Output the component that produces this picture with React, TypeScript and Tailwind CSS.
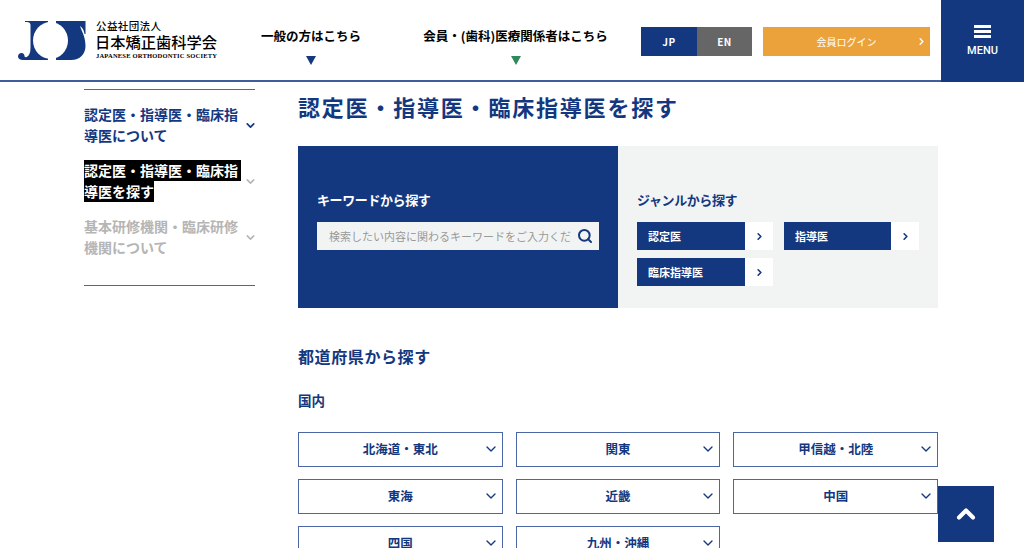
import {ChevronDown, ChevronRight, ChevronUp, Search} from "lucide-react";

const jpFont = "font-['Noto_Sans_CJK_JP','Noto_Sans',sans-serif]";

function Logo() {
	return (
		<div className="flex items-center">
			<svg width="68" height="39" viewBox="0 0 68 39" className="mr-[10px] shrink-0">
				<path d="M7 0H30V39H5C2 39 0 37.500 0 35.500C0 33.500 1.500 32 3.500 32C5.500 32 6.500 33.500 6.500 35C6.500 36 7.500 36.500 8.500 36C11 35 12.500 32 12.500 27V4C12.500 2 11 1 9 1H7Z" fill="#14387f" />
				<path d="M38 0H67.500V13H66.500C66 9.500 64.500 6.500 62 5C63 9 67.500 15 67.500 25C67.500 33 62 39 53 39H38Z" fill="#14387f" />
				<ellipse cx="32.500" cy="19.500" rx="17.500" ry="18.500" fill="#ffffff" />
			</svg>
			<div className="flex flex-col text-black">
				<span className="text-[10.500px] leading-[12px] font-medium tracking-[0.4px]">公益社団法人</span>
				<span className="text-[15.250px] leading-[18px] font-medium -ml-px">日本矯正歯科学会</span>
				<span className="mt-px font-['Liberation_Serif',serif] text-[6.500px] leading-[9px] font-bold tracking-[0.2px] whitespace-nowrap">JAPANESE ORTHODONTIC SOCIETY</span>
			</div>
		</div>
	);
}

function NavItem({label, color, width}: {label: string; color: string; width: string}) {
	return (
		<div className={`flex flex-col items-center ${width}`}>
			<span className="text-[12.500px] leading-[20px] font-bold text-black whitespace-nowrap">{label}</span>
			<span className={`mt-[10px] w-0 h-0 border-x-[5px] border-x-transparent border-t-[9px] ${color}`} />
		</div>
	);
}

function Header() {
	return (
		<header className="h-[82px] shrink-0 flex border-b-2 border-[#3f5c9c] bg-white">
			<div className="w-[223px] pl-[18px] flex items-center shrink-0">
				<Logo />
			</div>
			<div className="flex pt-[26px]">
				<NavItem label="一般の方はこちら" color="border-t-[#14387f]" width="w-[176px]" />
				<div className="w-[17px]" />
				<NavItem label="会員・(歯科)医療関係者はこちら" color="border-t-[#2f8a5b]" width="w-[199px]" />
			</div>
			<div className="ml-[26px] pt-[27px] flex">
				<div className="flex h-[29px] text-[10px] font-bold text-white tracking-[0.5px]">
					<span className="w-[56px] bg-[#14387f] flex items-center justify-center">JP</span>
					<span className="w-[55px] bg-[#666666] flex items-center justify-center">EN</span>
				</div>
				<div className="ml-[11px] w-[167px] h-[29px] bg-[#eca23b] text-white text-[10px] flex items-center justify-center relative">
					<span>会員ログイン</span>
					<ChevronRight className="absolute right-[3px] top-[9px]" size={11} strokeWidth={3} />
				</div>
			</div>
			<div className="ml-[11px] w-[83px] h-[82px] -mb-[2px] bg-[#14387f] flex flex-col items-center pt-[25px] text-white">
				<div className="flex flex-col gap-[2px]">
					<span className="block w-[17px] h-[3px] bg-white" />
					<span className="block w-[17px] h-[3px] bg-white" />
					<span className="block w-[17px] h-[3px] bg-white" />
				</div>
				<span className="mt-[6px] text-[11px] leading-[14px] font-['Roboto',sans-serif] font-medium">MENU</span>
			</div>
		</header>
	);
}

function Sidebar() {
	return (
		<aside className="w-[171px] shrink-0 mt-[7px] h-[197px] border-y border-[#4a66a4] flex flex-col pt-[7px]">
			<div className="h-[56px] flex items-center justify-between">
				<p className="w-[156px] text-[14px] leading-[21px] font-bold text-[#14387f]">認定医・指導医・臨床指導医について</p>
				<ChevronDown size={13} strokeWidth={3.200} className="text-[#14387f] -mr-[2px]" />
			</div>
			<div className="h-[56px] flex items-center justify-between">
				<p className="text-[14px] leading-[21px] font-bold">
					<span className="block w-[157px] bg-black text-white whitespace-nowrap">認定医・指導医・臨床指</span>
					<span className="block w-fit bg-black text-white">導医を探す</span>
				</p>
				<ChevronDown size={13} strokeWidth={2.800} className="text-[#b5b5b5] -mr-[2px]" />
			</div>
			<div className="h-[56px] flex items-center justify-between">
				<p className="w-[156px] text-[14px] leading-[21px] font-bold text-[#b5b5b5]">基本研修機関・臨床研修機関について</p>
				<ChevronDown size={13} strokeWidth={2.800} className="text-[#b5b5b5] -mr-[2px]" />
			</div>
		</aside>
	);
}

function GenreButton({label}: {label: string}) {
	return (
		<div className="flex h-[28px] text-[11px] font-bold">
			<span className="flex-1 bg-[#14387f] text-white flex items-center pl-[11px]">{label}</span>
			<span className="w-[28px] bg-white text-[#14387f] flex items-center justify-center">
				<ChevronRight size={11} strokeWidth={3.500} />
			</span>
		</div>
	);
}

function SearchPanel() {
	return (
		<div className="flex h-[162px] mt-[24px]">
			<div className="w-[320px] bg-[#14387f] pt-[44px] px-[19px]">
				<h3 className="text-[13px] leading-[20px] font-bold text-white tracking-[-0.4px]">キーワードから探す</h3>
				<div className="mt-[12px] h-[28px] bg-[#f2f4f4] flex items-center pl-[12px] pr-[6px] w-[282px]">
					<span className="flex-1 overflow-hidden whitespace-nowrap text-[11px] text-[#999999]">検索したい内容に関わるキーワードをご入力ください</span>
					<Search size={16} strokeWidth={3} className="text-[#14387f] ml-[5px] shrink-0" />
				</div>
			</div>
			<div className="w-[320px] bg-[#f2f4f4] pt-[44px] px-[19px]">
				<h3 className="text-[13px] leading-[20px] font-bold text-[#14387f] tracking-[-0.4px]">ジャンルから探す</h3>
				<div className="mt-[12px] grid grid-cols-[136px_135px] gap-x-[11px] gap-y-[8px]">
					<GenreButton label="認定医" />
					<GenreButton label="指導医" />
					<GenreButton label="臨床指導医" />
				</div>
			</div>
		</div>
	);
}

const regions = ["北海道・東北", "関東", "甲信越・北陸", "東海", "近畿", "中国", "四国", "九州・沖縄"];

function RegionSelect({label}: {label: string}) {
	return (
		<div className="relative h-[35px] border border-[#4a66a4] bg-white flex items-center justify-center text-[12.500px] font-bold text-[#14387f]">
			{label}
			<ChevronDown size={16} strokeWidth={2} className="absolute right-[3px] top-[8px]" />
		</div>
	);
}

export default function App() {
	return (
		<div className={`relative h-screen overflow-hidden bg-white flex flex-col ${jpFont}`}>
			<Header />
			<div className="flex pl-[84px]">
				<Sidebar />
				<main className="w-[640px] ml-[43px] shrink-0">
					<h1 className="mt-[8px] text-[22px] leading-[32px] font-bold text-[#14387f] tracking-[1.800px] whitespace-nowrap">認定医・指導医・臨床指導医を探す</h1>
					<SearchPanel />
					<h2 className="mt-[36px] text-[16px] leading-[24px] font-bold text-[#14387f] tracking-[0.600px]">都道府県から探す</h2>
					<h3 className="mt-[22px] text-[13.500px] leading-[20px] font-bold text-[#14387f]">国内</h3>
					<div className="mt-[22px] grid grid-cols-3 gap-x-[13px] gap-y-[12px]">
						{regions.map((region) => (
							<RegionSelect key={region} label={region} />
						))}
					</div>
				</main>
			</div>
			<div className="absolute left-[938px] top-[486px] w-[56px] h-[56px] bg-[#14387f] flex items-center justify-center text-white">
				<ChevronUp size={28} strokeWidth={3.500} />
			</div>
		</div>
	);
}
